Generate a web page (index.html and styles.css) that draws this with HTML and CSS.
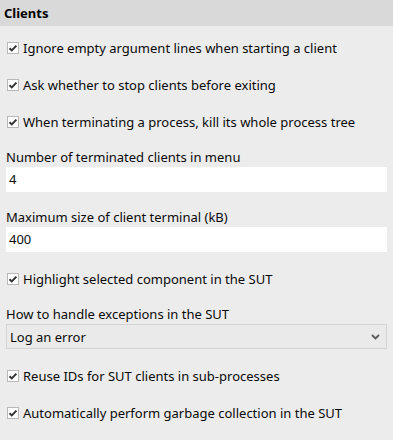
FILE: index.html
```html
<!DOCTYPE html>
<html>
<head>
<meta charset="utf-8">
<link rel="stylesheet" href="styles.css">
</head>
<body>
<div class="header">Clients</div>
<div class="content">
  <label class="cb-row"><span class="cb"><svg viewBox="0 0 12 12" width="12" height="12"><path d="M2.5 6.2 L4.8 8.4 L9.4 3.6" fill="none" stroke="#333" stroke-width="2"/></svg></span>Ignore empty argument lines when starting a client</label>
  <label class="cb-row"><span class="cb"><svg viewBox="0 0 12 12" width="12" height="12"><path d="M2.5 6.2 L4.8 8.4 L9.4 3.6" fill="none" stroke="#333" stroke-width="2"/></svg></span>Ask whether to stop clients before exiting</label>
  <label class="cb-row"><span class="cb"><svg viewBox="0 0 12 12" width="12" height="12"><path d="M2.5 6.2 L4.8 8.4 L9.4 3.6" fill="none" stroke="#333" stroke-width="2"/></svg></span>When terminating a process, kill its whole process tree</label>
  <div class="field">
    <div class="field-label">Number of terminated clients in menu</div>
    <div class="input">4</div>
  </div>
  <div class="field">
    <div class="field-label">Maximum size of client terminal (kB)</div>
    <div class="input">400</div>
  </div>
  <label class="cb-row"><span class="cb"><svg viewBox="0 0 12 12" width="12" height="12"><path d="M2.5 6.2 L4.8 8.4 L9.4 3.6" fill="none" stroke="#333" stroke-width="2"/></svg></span>Highlight selected component in the SUT</label>
  <div class="field">
    <div class="field-label">How to handle exceptions in the SUT</div>
    <div class="select"><span>Log an error</span><svg viewBox="0 0 9 6" width="9" height="6"><path d="M1 1 L4.5 4.5 L8 1" fill="none" stroke="#5a5a5a" stroke-width="1.8"/></svg></div>
  </div>
  <label class="cb-row"><span class="cb"><svg viewBox="0 0 12 12" width="12" height="12"><path d="M2.5 6.2 L4.8 8.4 L9.4 3.6" fill="none" stroke="#333" stroke-width="2"/></svg></span>Reuse IDs for SUT clients in sub-processes</label>
  <label class="cb-row"><span class="cb"><svg viewBox="0 0 12 12" width="12" height="12"><path d="M2.5 6.2 L4.8 8.4 L9.4 3.6" fill="none" stroke="#333" stroke-width="2"/></svg></span>Automatically perform garbage collection in the SUT</label>
</div>
</body>
</html>
```
FILE: styles.css
```css
html, body {
  margin: 0;
  padding: 0;
  background: #ececec;
}
body {
  font-family: "Noto Sans", sans-serif;
  font-size: 13px;
  color: #0a0a0a;
  width: 393px;
  height: 440px;
  overflow: hidden;
}
.header {
  height: 26px;
  background: #d9d9d9;
  font-weight: bold;
  line-height: 26px;
  padding-left: 4px;
  color: #000;
}
.content {
  display: flex;
  flex-direction: column;
  gap: 16px;
  padding: 11px 6px 0 6px;
}
.cb-row {
  display: flex;
  align-items: center;
  height: 21px;
  padding-left: 1px;
  white-space: nowrap;
}
.cb {
  width: 10px;
  height: 10px;
  border: 1px solid #b8b8b8;
  background: #fff;
  margin-right: 4px;
  flex: none;
}
.cb svg {
  display: block;
  margin: -1px;
}
.field {
  display: flex;
  flex-direction: column;
}
.field-label {
  height: 18px;
  line-height: 18px;
  margin-bottom: 1px;
  white-space: nowrap;
}
.input {
  height: 25px;
  line-height: 25px;
  background: #fff;
  padding-left: 3px;
}
.select {
  height: 23px;
  border: 1px solid #d4d4d4;
  background: #eaeaea;
  display: flex;
  align-items: center;
  justify-content: space-between;
  padding: 0 6px 0 3px;
}
.select svg {
  display: block;
}
```
